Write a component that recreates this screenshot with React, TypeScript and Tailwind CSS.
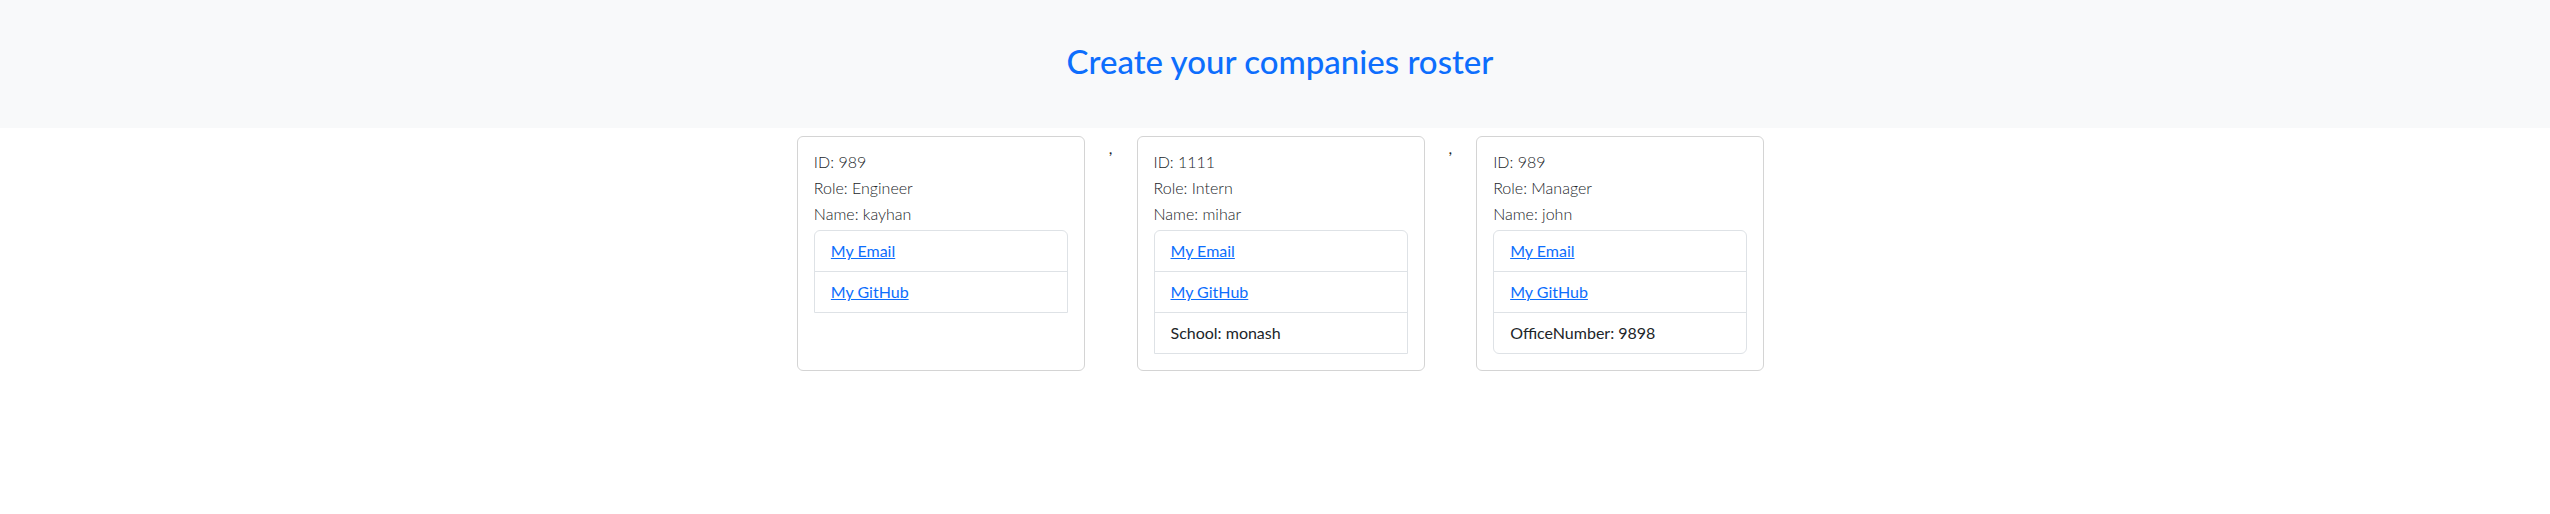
import React from 'react';

interface Member {
  id: string;
  role: string;
  name: string;
  extra?: string;
}

const members: Member[] = [
  { id: '989', role: 'Engineer', name: 'kayhan' },
  { id: '1111', role: 'Intern', name: 'mihar', extra: 'School: monash' },
  { id: '989', role: 'Manager', name: 'john', extra: 'OfficeNumber: 9898' },
];

const MemberCard: React.FC<{ member: Member; roundedBottom: boolean }> = ({ member, roundedBottom }) => {
  return (
    <div className="w-[288px] mx-6 flex flex-col border border-[#d4d4d4] rounded-md px-4 pt-[12px] pb-4 bg-white">
      <div className="text-[16px] leading-[26px] font-light text-[#212529]">ID: {member.id}</div>
      <div className="text-[16px] leading-[26px] font-light text-[#212529]">Role: {member.role}</div>
      <div className="text-[16px] leading-[26px] font-light text-[#212529]">Name: {member.name}</div>
      <ul
        className={
          roundedBottom
            ? 'mt-[3px] border border-[#dee2e6] rounded-md'
            : 'mt-[3px] border border-[#dee2e6] rounded-t-md'
        }
      >
        <li className="px-4 py-2 leading-6 text-[16px]">
          <a href="#" className="text-[#0d6efd] underline">My Email</a>
        </li>
        <li className="px-4 py-2 leading-6 text-[16px] border-t border-[#dee2e6]">
          <a href="#" className="text-[#0d6efd] underline">My GitHub</a>
        </li>
        {member.extra && (
          <li className="px-4 py-2 leading-6 text-[16px] text-[#212529] border-t border-[#dee2e6]">
            {member.extra}
          </li>
        )}
      </ul>
    </div>
  );
};

export default function App() {
  return (
    <div className="min-h-[514px] bg-white" style={{ fontFamily: 'Lato, "Noto Sans", sans-serif' }}>
      <header className="h-[128px] bg-[#f8f9fa] flex items-center justify-center pl-[10px]">
        <h1 className="text-[33px] font-medium text-[#0d6efd] pb-[4px]">Create your companies roster</h1>
      </header>
      <div className="mt-2 flex justify-center items-stretch pl-[11px]">
        {members.map((m, i) => (
          <React.Fragment key={i}>
            {i > 0 && <span className="text-[16px] leading-6 text-[#212529]">,</span>}
            <MemberCard member={m} roundedBottom={i === members.length - 1} />
          </React.Fragment>
        ))}
      </div>
    </div>
  );
}
